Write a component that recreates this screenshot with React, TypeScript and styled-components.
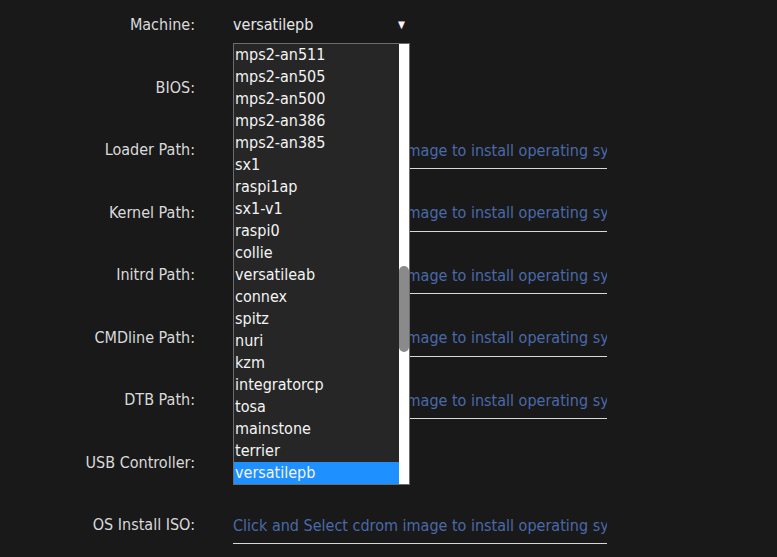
import React from "react";
import styled, { createGlobalStyle } from "styled-components";

const Global = createGlobalStyle`
  html, body {
    margin: 0;
    padding: 0;
    background: #191919;
  }
  body {
    font-family: "DejaVu Sans Condensed", "DejaVu Sans", sans-serif;
    font-stretch: semi-condensed;
    font-size: 16px;
  }
`;

const Form = styled.div`
  display: grid;
  grid-template-columns: 195px 374px;
  column-gap: 38px;
  grid-auto-rows: 62.5px;
  align-items: start;
  width: 777px;
  height: 557px;
  overflow: hidden;
`;

const Label = styled.label`
  margin-top: 15px;
  line-height: 20px;
  text-align: right;
  color: #dadada;
  white-space: nowrap;
`;

const Field = styled.div`
  margin-top: 15px;
  position: relative;
`;

const PathInput = styled.input`
  display: block;
  box-sizing: content-box;
  width: 374px;
  height: 20px;
  padding: 0 0 8px;
  margin: 0;
  border: 0;
  border-bottom: 1px solid #d8d8d8;
  background: transparent;
  font: inherit;
  font-stretch: semi-condensed;
  color: #e0e0e0;
  outline: none;
  &::placeholder {
    color: #4a69aa;
    opacity: 1;
  }
`;

const SelectBox = styled.div`
  display: flex;
  justify-content: space-between;
  align-items: center;
  width: 177px;
  height: 20px;
  box-sizing: border-box;
  padding-right: 5px;
  line-height: 20px;
  color: #e6e6e6;
`;

const Arrow = styled.span`
  font-size: 10px;
  color: #f4f4f4;
`;

const Dropdown = styled.div`
  position: absolute;
  top: 28px;
  left: 0;
  z-index: 10;
  width: 177px;
  box-sizing: border-box;
  border: 1px solid #6c6c6c;
  background: #262626;
  display: flex;
`;

const OptionList = styled.div`
  flex: 1;
  overflow: hidden;
`;

const Option = styled.div<{ $selected?: boolean }>`
  height: 22px;
  line-height: 22px;
  padding-left: 1px;
  color: #f4f4f4;
  white-space: nowrap;
  background: ${(p) => (p.$selected ? "#1e90ff" : "transparent")};
`;

const Track = styled.div`
  width: 10px;
  background: #ffffff;
`;

const Thumb = styled.div`
  margin-top: 222px;
  width: 10px;
  height: 86px;
  border-radius: 5px;
  background: #8a8a8a;
`;

const machines = [
  "mps2-an511",
  "mps2-an505",
  "mps2-an500",
  "mps2-an386",
  "mps2-an385",
  "sx1",
  "raspi1ap",
  "sx1-v1",
  "raspi0",
  "collie",
  "versatileab",
  "connex",
  "spitz",
  "nuri",
  "kzm",
  "integratorcp",
  "tosa",
  "mainstone",
  "terrier",
  "versatilepb",
];

const placeholder = "Click and Select cdrom image to install operating system";

const paths = ["Loader Path:", "Kernel Path:", "Initrd Path:", "CMDline Path:", "DTB Path:"];

export default function App() {
  return (
    <>
      <Global />
      <Form>
        <Label>Machine:</Label>
        <Field>
          <SelectBox>
            <span>versatilepb</span>
            <Arrow>▼</Arrow>
          </SelectBox>
          <Dropdown>
            <OptionList>
              {machines.map((m) => (
                <Option key={m} $selected={m === "versatilepb"}>
                  {m}
                </Option>
              ))}
            </OptionList>
            <Track>
              <Thumb />
            </Track>
          </Dropdown>
        </Field>

        <Label>BIOS:</Label>
        <Field>
          <SelectBox />
        </Field>

        {paths.map((p) => (
          <React.Fragment key={p}>
            <Label>{p}</Label>
            <Field>
              <PathInput readOnly placeholder={placeholder} />
            </Field>
          </React.Fragment>
        ))}

        <Label>USB Controller:</Label>
        <Field>
          <SelectBox />
        </Field>

        <Label>OS Install ISO:</Label>
        <Field>
          <PathInput readOnly placeholder={placeholder} />
        </Field>
      </Form>
    </>
  );
}
